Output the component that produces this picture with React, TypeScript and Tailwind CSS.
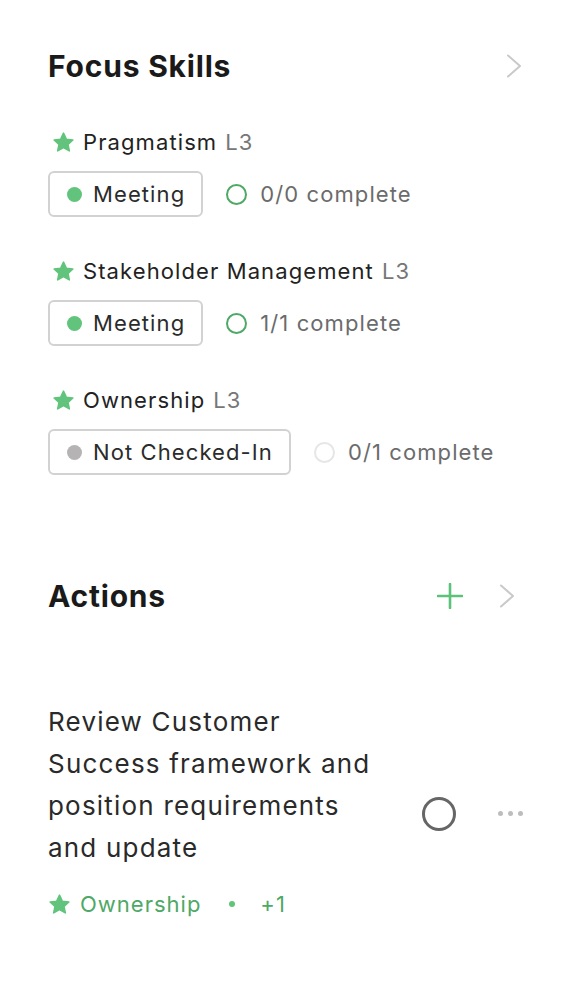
import { ReactNode } from 'react'

const font = { fontFamily: 'Inter, "Noto Sans", sans-serif' }

function Star({ className = '' }: { className?: string }) {
  return (
    <svg viewBox="0 0 24 24" className={className} fill="currentColor" stroke="currentColor" strokeWidth="1.6" strokeLinejoin="round">
      <path d="M12 2.2l2.9 6.3 6.9.8-5.1 4.7 1.4 6.8L12 17.4l-6.1 3.4 1.4-6.8-5.1-4.7 6.9-.8z" />
    </svg>
  )
}

function Chevron() {
  return (
    <svg viewBox="0 0 16 24" className="w-[16px] h-[24px] text-[#c9c9c9]" fill="none" stroke="currentColor" strokeWidth="2" strokeLinecap="round" strokeLinejoin="round">
      <path d="M2 1.5l12 10.5-12 10.5" />
    </svg>
  )
}

function SectionHeader({ title, children, right = 'pr-[2px]' }: { title: string; children?: ReactNode; right?: string }) {
  return (
    <div className="flex items-center justify-between h-[40px]">
      <h2 className="text-[30px] font-bold text-[#1a1a1a] tracking-[0.8px]">{title}</h2>
      <div className={`flex items-center gap-[36px] ${right}`}>{children}</div>
    </div>
  )
}

type Skill = {
  name: string
  status: string
  active: boolean
  progress: string
}

const skills: Skill[] = [
  { name: 'Pragmatism', status: 'Meeting', active: true, progress: '0/0 complete' },
  { name: 'Stakeholder Management', status: 'Meeting', active: true, progress: '1/1 complete' },
  { name: 'Ownership', status: 'Not Checked-In', active: false, progress: '0/1 complete' },
]

function SkillRow({ skill }: { skill: Skill }) {
  return (
    <div className="flex flex-col gap-[15px]">
      <div className="flex items-center h-[28px] tracking-[1.1px] text-[22px]">
        <Star className="w-[23px] h-[23px] text-[#62c47c] ml-[4px] mr-[8px]" />
        <span className="text-[#222]">{skill.name}</span>
        <span className="text-[#777] ml-[8px]">L3</span>
      </div>
      <div className="flex items-center text-[22px] tracking-[1.1px]">
        <div className="flex items-center h-[46px] pl-[17px] pr-[16px] border-2 border-[#d2d2d2] rounded-[6px]">
          <span className={`w-[15px] h-[15px] rounded-full ${skill.active ? 'bg-[#62c47c]' : 'bg-[#b5b3b3]'}`} />
          <span className="text-[#2b2b2b] ml-[11px]">{skill.status}</span>
        </div>
        <span
          className={`ml-[23px] w-[21px] h-[21px] rounded-full border-[2.5px] ${skill.active ? 'border-[#4ea866]' : 'border-[#e6e6e6]'}`}
        />
        <span className="text-[#6b6b6b] ml-[13px]">{skill.progress}</span>
      </div>
    </div>
  )
}

export default function App() {
  return (
    <div className="w-[572px] min-h-[1000px] bg-white px-[48px] pt-[46px]" style={font}>
      <SectionHeader title="Focus Skills">
        <Chevron />
      </SectionHeader>

      <div className="flex flex-col gap-[40px] mt-[42px]">
        {skills.map((s) => (
          <SkillRow key={s.name} skill={s} />
        ))}
      </div>

      <div className="mt-[101px]">
        <SectionHeader title="Actions" right="pr-[9px]">
          <svg viewBox="0 0 26 26" className="w-[26px] h-[26px] text-[#5cc27a]" fill="none" stroke="currentColor" strokeWidth="2.6" strokeLinecap="round">
            <path d="M13 1v24M1 13h24" />
          </svg>
          <Chevron />
        </SectionHeader>
      </div>

      <div className="mt-[85px] flex items-center">
        <div className="w-[330px]">
          <p className="text-[26px] leading-[42px] tracking-[1.2px] text-[#2a2a2a]">
            Review Customer Success framework and position requirements and update
          </p>
          <div className="mt-[20px] flex items-center h-[30px] text-[22px] tracking-[1px]">
            <Star className="w-[23px] h-[23px] text-[#62c47c] mr-[9px]" />
            <span className="text-[#4ea866]">Ownership</span>
            <span className="ml-[28px] w-[6px] h-[6px] rounded-full bg-[#62c47c]" />
            <span className="ml-[25px] text-[#4ea866]">+1</span>
          </div>
        </div>
        <span className="ml-[44px] mt-[8px] w-[34px] h-[34px] rounded-full border-[3.5px] border-[#666]" />
        <div className="ml-[42px] mt-[6px] flex items-center gap-[5px]">
          <span className="w-[5px] h-[5px] rounded-full bg-[#bdbdbd]" />
          <span className="w-[5px] h-[5px] rounded-full bg-[#bdbdbd]" />
          <span className="w-[5px] h-[5px] rounded-full bg-[#bdbdbd]" />
        </div>
      </div>
    </div>
  )
}
